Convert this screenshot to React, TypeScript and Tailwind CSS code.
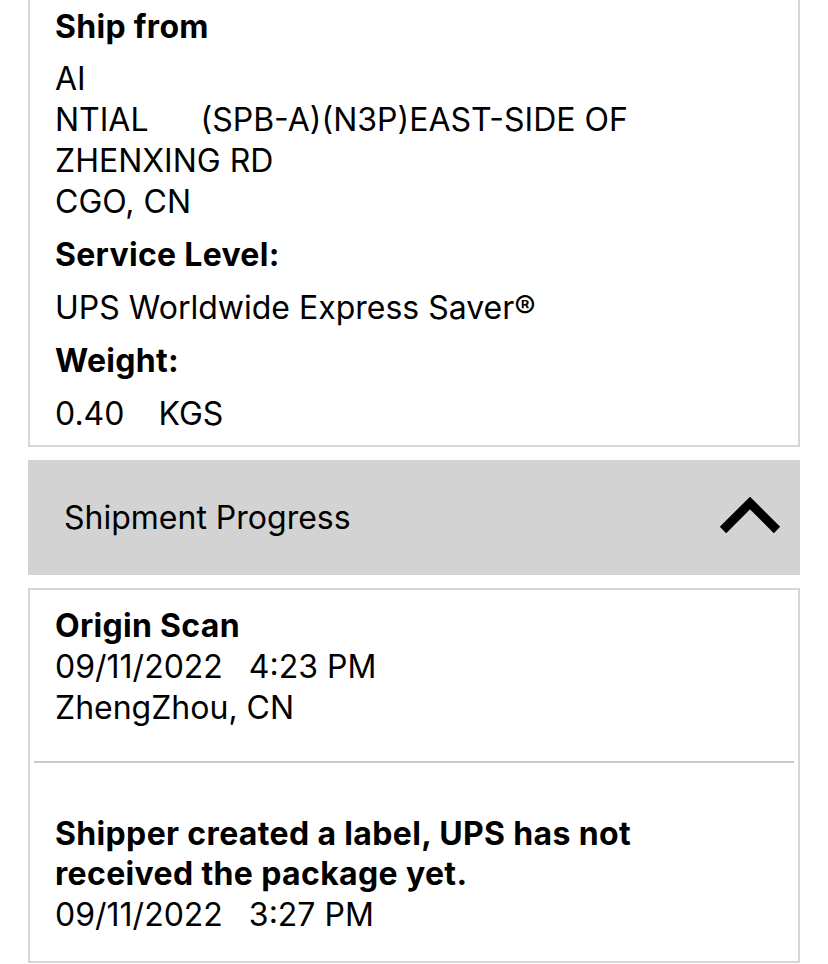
import React from "react";

const font = { fontFamily: 'Inter, "Liberation Sans", sans-serif' };

function Label({ children }: { children: React.ReactNode }) {
  return <div className="font-bold tracking-[0.3px] leading-[41px]">{children}</div>;
}

export default function App() {
  return (
    <div
      className="w-[828px] h-[964px] bg-white text-black text-[32px] overflow-hidden"
      style={font}
    >
      {/* Ship-from card */}
      <div className="mx-[28px] border-x-2 border-b-2 border-[#d6d6d6] pl-[25px] pt-[6px] pb-[11px]">
        <Label>Ship from</Label>
        <div className="mt-[11px] leading-[41px]">
          <div>AI</div>
          <div className="whitespace-pre">
            NTIAL<span className="ml-[52px]">(SPB-A)(N3P)EAST-SIDE OF</span>
          </div>
          <div>ZHENXING RD</div>
          <div>CGO, CN</div>
        </div>
        <div className="mt-[12px]">
          <Label>Service Level:</Label>
        </div>
        <div className="mt-[12px] leading-[41px]">UPS Worldwide Express Saver®</div>
        <div className="mt-[12px]">
          <Label>Weight:</Label>
        </div>
        <div className="mt-[12px] leading-[41px]">
          0.40<span className="ml-[34px]">KGS</span>
        </div>
      </div>

      {/* Shipment Progress header */}
      <div className="mx-[28px] mt-[13px] h-[115px] bg-[#d3d3d3] flex items-center justify-between pl-[36px] pr-[19px]">
        <span className="leading-[41px]">Shipment Progress</span>
        <svg width="62" height="40" viewBox="0 0 62 40" className="mb-[4px]">
          <path
            d="M4 34 L31 7 L58 34"
            fill="none"
            stroke="#000"
            strokeWidth="9"
            strokeLinecap="butt"
            strokeLinejoin="miter"
          />
        </svg>
      </div>

      {/* Progress card */}
      <div className="mx-[28px] mt-[13px] border-2 border-[#d6d6d6] px-[4px]">
        <div className="pl-[21px] pt-[15px] pb-[33px] leading-[41px]">
          <div className="font-bold tracking-[0.3px]">Origin Scan</div>
          <div>
            09/11/2022<span className="ml-[26px]">4:23 PM</span>
          </div>
          <div>ZhengZhou, CN</div>
        </div>
        <div className="h-[2px] bg-[#cdc9c5]" />
        <div className="pl-[21px] pt-[51px] pb-[25px] leading-[40px]">
          <div className="font-bold tracking-[0.35px]">Shipper created a label, UPS has not</div>
          <div className="font-bold tracking-[0.35px]">received the package yet.</div>
          <div className="leading-[42px]">
            09/11/2022<span className="ml-[26px]">3:27 PM</span>
          </div>
        </div>
      </div>
    </div>
  );
}
